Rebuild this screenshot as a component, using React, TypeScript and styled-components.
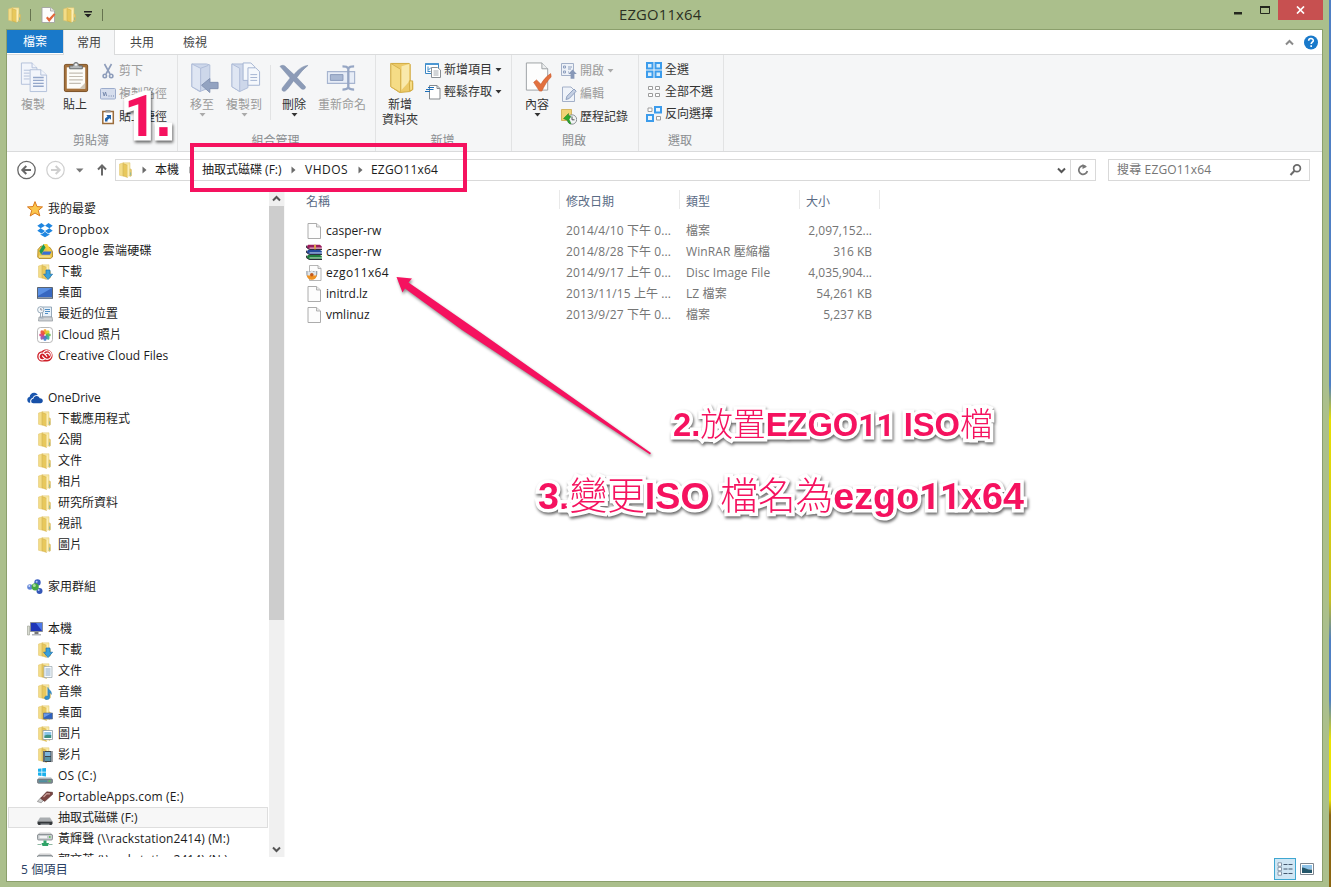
import React from 'react';
import styled, { createGlobalStyle } from 'styled-components';

const GlobalStyle = createGlobalStyle`
  * { box-sizing: border-box; }
  body {
    margin: 0;
    font-family: 'Open Sans', 'Noto Sans CJK TC', sans-serif;
    font-size: 12px;
    line-height: 16px;
    color: #1b1b1b;
    overflow: hidden;
  }
  svg { display: block; flex: none; }
`;

const Desktop = styled.div`
  width: 1331px;
  height: 887px;
  position: relative;
  overflow: hidden;
  display: flex;
  background: linear-gradient(#4f7fc4 0 385px, #e8e000 420px, #c8c020 600px, #4f7fc4 640px 700px, #ece400 740px 800px, #8a6410 815px);
`;
const Frame = styled.div`
  width: 1329px;
  height: 887px;
  background: #abbf8c;
  padding: 0 6px 5px;
  display: flex;
  flex-direction: column;
`;
const TitleBar = styled.header`
  height: 29px;
  display: grid;
  grid-template-columns: 613px auto 1fr;
`;
const QuickAccess = styled.div`
  display: flex;
  align-items: center;
  padding-left: 1px;
`;
const QuickItem = styled.div<{ $gap: number }>`
  margin-right: ${p => p.$gap}px;
`;
const TitleRule = styled.div<{ $gap: number }>`
  width: 1px;
  height: 12px;
  background: #66734f;
  margin-right: ${p => p.$gap}px;
`;
const Title = styled.h1`
  margin: 0;
  font-size: 14.8px;
  letter-spacing: 0.2px;
  font-weight: 400;
  line-height: 29px;
  color: #2b3022;
`;
const Controls = styled.div`
  display: flex;
  justify-content: flex-end;
  align-items: flex-start;
`;
const ControlSlot = styled.div<{ $w: number }>`
  width: ${p => p.$w}px;
  height: 20px;
  display: flex;
  justify-content: center;
  align-items: center;
`;
const CloseButton = styled(ControlSlot)`
  background: #c75050;
`;
const Client = styled.div`
  flex: 1;
  min-height: 0;
  background: #fff;
  border: 1px solid #8b9f6c;
  display: flex;
  flex-direction: column;
`;
const Tabs = styled.nav`
  height: 25px;
  display: flex;
  border-bottom: 1px solid #dadbdc;
`;
const FileTab = styled.div`
  width: 56px;
  height: 23px;
  background: #1979ca;
  color: #fff;
  text-align: center;
  line-height: 23px;
`;
const Tab = styled.div<{ $w: number; $active?: boolean }>`
  width: ${p => p.$w}px;
  height: 25px;
  line-height: 25px;
  text-align: center;
  color: #444;
  ${p => p.$active && 'background:#f5f6f7;border-right:1px solid #dadbdc;border-left:1px solid #dadbdc;'}
`;
const TabTools = styled.div`
  margin-left: auto;
  display: flex;
  align-items: center;
  gap: 10px;
  padding-right: 4px;
`;
const Ribbon = styled.section`
  height: 97px;
  background: #f5f6f7;
  border-bottom: 1px solid #dadbdc;
  display: flex;
`;
const Group = styled.div<{ $w: number }>`
  width: ${p => p.$w}px;
  border-right: 1px solid #e2e3e4;
  display: flex;
  flex-direction: column;
`;
const GroupBody = styled.div`
  height: 77px;
  display: flex;
  padding-top: 4px;
`;
const GroupLabel = styled.div`
  text-align: center;
  color: #8a8d90;
  line-height: 18px;
  padding-right: 2px;
`;
const BigButton = styled.div<{ $w: number; $off?: boolean; $x?: number }>`
  width: ${p => p.$w}px;
  margin-left: ${p => p.$x || 0}px;
  display: flex;
  flex-direction: column;
  align-items: center;
  padding-top: 2px;
  line-height: 15px;
  text-align: center;
  white-space: nowrap;
  color: ${p => (p.$off ? '#9b9b9b' : '#333')};
`;
const BigLabel = styled.span`
  margin-top: 3px;
  margin-bottom: 1px;
`;
const IconSlot = styled.div<{ $shift: number }>`
  padding-left: ${p => p.$shift * 2}px;
`;
const SmallStack = styled.div<{ $row: number; $x?: number }>`
  margin-left: ${p => p.$x || 0}px;
  display: grid;
  grid-auto-rows: ${p => p.$row}px;
  align-content: start;
`;
const SmallButton = styled.div<{ $off?: boolean }>`
  display: flex;
  align-items: center;
  gap: 3px;
  white-space: nowrap;
  color: ${p => (p.$off ? '#9b9b9b' : '#333')};
`;
const InnerRule = styled.div`
  width: 1px;
  height: 55px;
  margin: 6px 0 0 5px;
  background: #e2e3e4;
`;
const AddressRow = styled.div`
  height: 38px;
  display: flex;
  align-items: flex-start;
  gap: 12px;
  padding: 7px 12px 0 10px;
`;
const NavButtons = styled.div`
  width: 98px;
  margin-right: -12px;
  height: 22px;
  display: flex;
  align-items: center;
`;
const Field = styled.div<{ $w: number }>`
  width: ${p => p.$w}px;
  height: 22px;
  border: 1px solid #d9d9d9;
  display: flex;
  align-items: center;
`;
const Crumb = styled.span<{ $w: number; $track?: number }>`
  width: ${p => p.$w}px;
  white-space: nowrap;
  letter-spacing: ${p => p.$track ?? 0}px;
`;
const CrumbArrow = styled.span<{ $w: number; $pad?: number }>`
  width: ${p => p.$w}px;
  padding-left: ${p => p.$pad || 0}px;
  display: flex;
  align-items: center;
`;
const RefreshBox = styled.div`
  width: 25px;
  height: 20px;
  border-left: 1px solid #d9d9d9;
  display: flex;
  align-items: center;
  justify-content: center;
`;
const SearchText = styled.span`
  padding-left: 8px;
  flex: 1;
  color: #757575;
  letter-spacing: 0.15px;
`;
const Body = styled.main`
  height: 667px;
  display: flex;
`;
const Sidebar = styled.aside`
  width: 261px;
  height: 667px;
  overflow: hidden;
  padding: 8px 0 0 1px;
`;
const TreeRow = styled.div<{ $level: number; $selected?: boolean }>`
  height: 21px;
  display: flex;
  align-items: center;
  gap: 5px;
  padding-left: ${p => (p.$level ? 28 : 18)}px;
  border: 1px solid ${p => (p.$selected ? '#dedede' : 'transparent')};
  background: ${p => (p.$selected ? '#f7f7f7' : 'transparent')};
  white-space: nowrap;
`;
const TreeLabel = styled.span<{ $track: number }>`
  letter-spacing: ${p => p.$track}px;
`;
const Scrollbar = styled.div`
  width: 16px;
  margin-left: 1px;
  background: #f0f0f0;
  border-right: 1px solid #f8f8f8;
  display: flex;
  flex-direction: column;
`;
const ScrollEnd = styled.div`
  width: 15px;
  height: 16px;
  display: flex;
  align-items: center;
  justify-content: center;
`;
const Thumb = styled.div`
  width: 15px;
  height: 414px;
  margin-bottom: auto;
  background: #cdcdcd;
`;
const Files = styled.section`
  padding-left: 15px;
`;
const HeaderRow = styled.div`
  display: flex;
  height: 30px;
`;
const HeaderCell = styled.div<{ $w: number }>`
  width: ${p => p.$w}px;
  height: 19px;
  padding-left: 6px;
  padding-top: 3px;
  line-height: 17px;
  color: #5a6b85;
  border-right: 1px solid #e9e9e9;
`;
const FileRow = styled.div`
  height: 21px;
  display: flex;
  align-items: center;
  white-space: nowrap;
`;
const NameCell = styled.div<{ $track: number }>`
  width: 266px;
  padding-left: 6px;
  letter-spacing: ${p => p.$track}px;
  display: flex;
  align-items: center;
  gap: 4px;
`;
const MetaCell = styled.div<{ $w: number; $right?: boolean }>`
  width: ${p => p.$w}px;
  color: #757575;
  letter-spacing: ${p => (p.$right ? 0 : 0.1)}px;
  text-align: ${p => (p.$right ? 'right' : 'left')};
`;
const StatusBar = styled.footer`
  flex: 1;
  display: flex;
  align-items: center;
  justify-content: space-between;
  padding-left: 14px;
  padding-right: 4px;
  letter-spacing: 0.2px;
  color: #2a4063;
`;
const StatusText = styled.span`
  padding-top: 1px;
`;
const Views = styled.div`
  display: flex;
  align-items: center;
`;
const ViewButton = styled.div<{ $on?: boolean }>`
  width: 22px;
  height: 22px;
  display: flex;
  align-items: center;
  justify-content: center;
  border: 1px solid ${p => (p.$on ? '#3fa7d1' : 'transparent')};
  background: ${p => (p.$on ? '#cfe6f4' : 'transparent')};
`;

const PINK = '#f5125f';
const Highlight = styled.div`
  position: absolute;
  left: 190px;
  top: 143px;
  width: 277px;
  height: 49px;
  border: 4px solid ${PINK};
`;
const Callout = styled.div<{ $x: number; $y: number; $size: number; $halo?: number; $track?: number }>`
  position: absolute;
  left: ${p => p.$x}px;
  top: ${p => p.$y}px;
  font-family: 'Liberation Sans', 'Noto Sans CJK TC', sans-serif;
  font-weight: 700;
  font-size: ${p => p.$size}px;
  letter-spacing: ${p => p.$track || 0}px;
  line-height: 1;
  color: ${PINK};
  white-space: pre;
  -webkit-text-stroke: ${p => p.$halo || 7}px #fff;
  stroke-linejoin: round;
  paint-order: stroke fill;
  filter: drop-shadow(1px 2px 1.5px rgba(0, 0, 0, 0.6));
`;
const Han = styled.span`
  font-weight: 300;
`;
/* Footless numeral one, scaled to the height and advance of the digits around it. */
const One = styled.span`
  font-family: Roboto, sans-serif;
  font-size: 0.967em;
  line-height: 0;
`;
const ArrowLayer = styled.svg`
  position: absolute;
  left: 380px;
  top: 260px;
  filter: drop-shadow(1px 2px 1.5px rgba(0, 0, 0, 0.45));
`;

/* ---------- small glyphs ---------- */
const Down = ({ c = '#333' }: { c?: string }) => (
  <svg width="7" height="4" viewBox="0 0 7 4"><path d="M0.5 0h6L3.5 3.5z" fill={c} /></svg>
);
const Right = () => (
  <svg width="5" height="8" viewBox="0 0 5 8"><path d="M.5.5v7L4.5 4z" fill="#6b6b6b" /></svg>
);
const Chevron = ({ up, c = '#555' }: { up?: boolean; c?: string }) => (
  <svg width="9" height="7" viewBox="0 0 9 7">
    <path d={up ? 'M1 5.5L4.5 2 8 5.5' : 'M1 1.5L4.5 5 8 1.5'} fill="none" stroke={c} strokeWidth="2" />
  </svg>
);

/* ---------- 16px icons ---------- */
const FolderShape = () => (
  <>
    <path d="M1.5 2l4-1.2v13.400l-4-.9z" fill="#f3dc86" stroke="#e0c268" strokeWidth=".5" />
    <path d="M5 .8h7v13H5z" fill="#f8e8a4" stroke="#dfc46c" strokeWidth=".5" />
    <path d="M5.200 1.600l4.300 1.600v12.300l-4.300-1.700z" fill="#e8c85c" stroke="#cda944" strokeWidth=".5" />
    <path d="M9.500 3.200l1.200-.8v11.800l-1.200 1.200z" fill="#fff3bd" />
    <path d="M12 6.800l1.500.8v6.200l-1.500.8z" fill="#e9cf72" stroke="#cfae50" strokeWidth=".4" />
    <path d="M12.600 10.400v3" stroke="#7ab3a4" strokeWidth=".8" />
  </>
);
const DownArrow16 = () => (
  <path d="M9 6h4v4.200h2.600L11 15.600 6.600 10.200H9z" fill="#38a0dc" stroke="#1a6fae" strokeWidth=".7" />
);
const PageShape = () => (
  <>
    <path d="M2 .5h8.500L14.500 4v11.500H2z" fill="#fdfdfd" stroke="#a3a3a3" strokeWidth=".9" />
    <path d="M10.500 .5V4h4" fill="#e8e8e8" stroke="#a3a3a3" strokeWidth=".8" />
  </>
);

const icons: Record<string, React.ReactNode> = {
  folder: <FolderShape />,
  page: <PageShape />,
  star: <path d="M8 .6l2 5 5.500.3-4.200 3.500 1.500 5.500L8 12l-4.800 3 1.500-5.600L.5 5.900 6 5.600z" fill="#fbc64c" stroke="#d9781d" strokeWidth="1" />,
  dropbox: (
    <g fill="#1f86e0">
      <path d="M4.500 1L.3 3.800l3.300 2.500L8 3.700zM11.500 1L8 3.700l4.400 2.600 3.300-2.500zM.3 8.800l4.200 2.700L8 8.900 3.600 6.300zM12.400 6.300L8 8.900l3.500 2.600 4.200-2.700zM8 9.700l-3.400 2.600-1-.6v1L8 15.300l4.400-2.600v-1l-1 .6z" />
    </g>
  ),
  gdrive: (
    <>
      <path d="M1 6.500L4 3l9 1.500 2.500 4V14l-2 1.500H2L.7 14z" fill="#e8c44a" stroke="#a98220" strokeWidth=".8" />
      <path d="M6.500 1h3.700l4.300 7.500h-3.700z" fill="#f6cf3e" />
      <path d="M6.500 1l2 3.500L4.200 11.500 2.300 8z" fill="#1f9a55" />
      <path d="M6.300 8.500h8.400l-1.900 3.200H4.400z" fill="#3a6fd4" />
      <path d="M2 12.500h11.500v2H2z" fill="#f3dc86" />
    </>
  ),
  download: <><FolderShape /><DownArrow16 /></>,
  desktop: (
    <>
      <path d="M.5 2.500h15v11H.5z" fill="#3767c0" stroke="#5b6470" />
      <path d="M1 3h14L1 11z" fill="#5a90e4" />
      <path d="M1 12h14v1.500H1z" fill="#8b98aa" />
    </>
  ),
  recent: (
    <>
      <path d="M5.500 1h9v10h-9z" fill="#e9f2fa" stroke="#7f95a8" strokeWidth=".8" />
      <path d="M8 3.500h5M8 5.500h5M8 7.500h3" stroke="#4f8fc5" />
      <path d="M2 11h13l.7 4H1.500z" fill="#cfd3d6" stroke="#8c9499" strokeWidth=".7" />
      <circle cx="3.800" cy="3.800" r="3.200" fill="#f4f8fb" stroke="#8fa3b2" strokeWidth=".9" />
      <path d="M3.800 2v2h1.500" fill="none" stroke="#667" strokeWidth=".7" />
      <path d="M3.500 7v5h3" fill="none" stroke="#9ab" />
    </>
  ),
  photos: (
    <>
      <rect x=".5" y=".5" width="15" height="15" rx="3" fill="#fff" stroke="#a7a7a7" strokeWidth=".8" />
      {['#f6a021', '#d9cf23', '#5fb947', '#35a99a', '#3d78c9', '#8b55b0', '#d33f7f', '#e94b35'].map((c, i) => (
        <ellipse key={c} cx="8" cy="4.700" rx="1.800" ry="2.600" fill={c} opacity=".9" transform={`rotate(${i * 45} 8 8)`} />
      ))}
    </>
  ),
  cc: (
    <>
      <path d="M4.800 3.300C6.500 1.200 11 .8 13.300 3c2.300 1.800 2.900 5 1.500 7.500-1 1.900-2.700 3-4.800 3H5.300C2.500 13.500.2 11.200.2 8.400c0-2.700 2-4.900 4.600-5.100z" fill="#cf1f28" />
      <g fill="none" stroke="#fff" strokeWidth="1.200" strokeLinecap="round">
        <path d="M8 10.900c-.8.700-1.700 1-2.700.9-1.800-.1-3.200-1.600-3.200-3.400S3.500 5 5.400 5c1.500 0 2.400.9 3.200 1.900l1.200 1.400" />
        <path d="M6.600 4.300c1-1.200 2.200-1.700 3.600-1.600 2.400.1 4.200 2 4.100 4.400-.1 2.300-2 4.200-4.300 4.200-1.700 0-2.700-.9-3.500-1.900L5.400 8" />
        <path d="M8.400 6.500c.3-.9 1-1.400 1.900-1.400 1.200 0 2.100.9 2.100 2.100" />
      </g>
    </>
  ),
  onedrive: (
    <>
      <path d="M.3 9.700c0-1.600 1-2.500 2.300-2.700C2.900 4.500 5 2.500 7.400 2.800 9 3 10.200 3.900 10.800 5 8 4.900 6.300 6.100 5.600 7.900 3.800 8.200 2.800 9.700 3.200 12.800H2.500C1 12.300.3 11.300.3 9.700z" fill="#1a56ae" />
      <path d="M4.200 11c0-1.300.9-2.200 2.200-2.300C6.700 6.900 8 5.900 9.700 6c1.600.1 2.600 1 3 2.300 1.900-.1 3.100.9 3.100 2.500 0 1.500-.9 2.500-2.400 2.500H6.300C4.900 13.300 4.200 12.300 4.200 11z" fill="#1750a8" />
    </>
  ),
  homegroup: (
    <>
      <circle cx="10.500" cy="3.500" r="3.200" fill="#3f62c2" />
      <circle cx="3" cy="8" r="2.800" fill="#6285d8" />
      <circle cx="12.500" cy="12" r="3" fill="#3558b8" />
      <circle cx="8.200" cy="7.800" r="3.600" fill="#46a842" />
      <circle cx="7.300" cy="6.600" r="1.500" fill="#a9dd9b" />
      <circle cx="9.700" cy="2.700" r="1" fill="#b8c9f4" />
      <circle cx="11.700" cy="11" r="1" fill="#b8c9f4" />
      <circle cx="2.300" cy="7" r=".9" fill="#d5e0fa" />
    </>
  ),
  computer: (
    <>
      <path d="M.5 5h2v9h-2z" fill="#d9dcd2" stroke="#999c90" strokeWidth=".6" />
      <path d="M3.500 1.500h12v9h-12z" fill="#2036b8" stroke="#8a8f98" />
      <path d="M9 2h6v8z" fill="#4d78e8" />
      <path d="M7.500 11h4v2h-4z" fill="#777" /><path d="M5 13h9v1.500H5z" fill="#b3b6bb" />
    </>
  ),
  docs: (
    <><FolderShape /><path d="M7 3.500h8v11H7z" fill="#f7fafc" stroke="#96a3ae" strokeWidth=".7" /><path d="M8.500 6h5M8.500 8h5M8.500 10h5M8.500 12h5" stroke="#7ba0c4" strokeWidth=".9" /></>
  ),
  music: (
    <><FolderShape /><path d="M11 3.500c.3 2.500 4.200 3.200 3.300 7-.5-1.200-1.200-1.800-1.800-2v5c0 2.800-4.700 2.800-4.900.5-.1-1.800 1.800-2.500 3.200-1.900V3.500z" fill="#2f8fd0" stroke="#1b6ca8" strokeWidth=".4" /></>
  ),
  deskfolder: (
    <><FolderShape /><path d="M6.500 8h9v6h-9z" fill="#2e62c0" stroke="#66707c" strokeWidth=".7" /><path d="M7 8.500h7l-7 4z" fill="#6b9ae6" /></>
  ),
  pictures: (
    <><FolderShape /><path d="M6 4.500h9.500v9H6z" fill="#fff" stroke="#8d9aa5" strokeWidth=".8" /><path d="M7.300 6h7v3.500h-7z" fill="#8cc5ea" /><path d="M7.300 9.500l3-.8 4 .4V12h-7z" fill="#3b8f83" /></>
  ),
  videos: (
    <><FolderShape /><path d="M6 4h9.500v11H6z" fill="#3c444c" /><path d="M8 5h5.500v4H8z" fill="#7fb6dd" /><path d="M8 10h5.500v4H8z" fill="#5895a8" /><path d="M7 4.500v11M14.500 4.500v11" stroke="#dfe4e8" strokeWidth="1" strokeDasharray="1 1" /></>
  ),
  osdrive: (
    <>
      <path d="M1 .8l3.500-.4v3.400H1zM5.200.300L9 0v3.800H5.200zM1 4.500h3.500v3.400L1 7.500zM5.200 4.500H9v3.900l-3.800-.5z" fill="#1ab0ec" />
      <path d="M2 9h12l1.500 3H.5z" fill="#d3d9dd" /><rect x=".5" y="11" width="15" height="4.300" rx="1" fill="#7c8a92" stroke="#555f66" strokeWidth=".6" />
      <path d="M2 12.300h8v1.800H2z" fill="#4f8f9f" /><path d="M11.500 12.500h2v1.300h-2z" fill="#55d04a" />
    </>
  ),
  usb: (
    <>
      <path d="M.3 12.500L4 8.500l3.700 1.700-3.500 3.600z" fill="#cfcfcf" stroke="#777" strokeWidth=".6" />
      <path d="M3.500 9.300L9.700 2.800l5.800.5.200 2-8 7.200z" fill="#7b4643" stroke="#43201f" strokeWidth=".5" />
      <path d="M6.500 8L10 4.600l3 .2" fill="none" stroke="#c9a09a" strokeWidth="1.200" />
    </>
  ),
  removable: (
    <>
      <path d="M3 7.500h10l2.500 4H.5z" fill="#a9adb0" /><path d="M.5 11.500h15v2.200l-1 1.300h-13l-1-1.300z" fill="#33373a" /><path d="M3.500 13.500h9v1.500h-9z" fill="#8d9194" />
    </>
  ),
  netdrive: (
    <>
      <path d="M2.500 2h11l2 2.500H.5z" fill="#e6e8ea" stroke="#999" strokeWidth=".5" /><rect x=".5" y="3.500" width="15" height="5.500" rx="1.200" fill="#c7cbce" stroke="#6d7478" strokeWidth=".7" />
      <path d="M2.500 5h7.500v2.200H2.500z" fill="#f2f3f4" /><path d="M12 5.300h1.500v1.500H12z" fill="#43c03c" />
      <path d="M6.500 9.500h3v2.500H12L11 15H5.500L4.500 12h2z" fill="#2fa368" /><path d="M.5 13.500h4M12 13.500h3.500" stroke="#8fb7a2" strokeWidth="1" />
    </>
  ),
  rar: (
    <>
      <path d="M2 .8h12l1.800 1.700v2.800H3.300L.5 3.500z" fill="#9b1b5c" /><path d="M3.500 3.600H16v1H3.500z" fill="#f0dbe5" />
      <path d="M2 6h12l1.800 1v3.200H3.300L.5 8.500z" fill="#234a9c" /><path d="M3.500 8.500H16v.9H3.500z" fill="#dfe8f5" />
      <path d="M2 11h12l1.800 1v3.400H3.300L.5 13.500z" fill="#1f7d3d" /><path d="M3.500 13.500H16v.9H3.500z" fill="#d8f0dc" />
      <path d="M.8 1.500L.2 3.200l3 2.300H16M.8 6.500L.2 8.300l3 2.200H16M.8 11.500l-.6 2 3 2H16" fill="none" stroke="#1d1d2c" strokeWidth=".9" />
      <path d="M8 .8h2v4.500H8z" fill="#d9a04a" />
    </>
  ),
  disc: (
    <>
      <path d="M3.500.5H12L15 3.500v12H3.500z" fill="#fdfdfd" stroke="#a3a3a3" strokeWidth=".8" /><path d="M12 .5v3h3" fill="#e8e8e8" stroke="#a3a3a3" strokeWidth=".8" />
      <path d="M.3 6h11v3a5.500 5.300 0 01-11 0z" fill="#98a1ab" />
      <path d="M.8 10h10a5 4.800 0 01-10 0z" fill="#f09322" />
      <path d="M1.500 5.500l2.500 1.500 1.500-2L7.500 7l2.500-1.500v5H1.500z" fill="#dfe4e8" /><circle cx="5.800" cy="9.700" r="1.800" fill="#c55a18" />
    </>
  ),
  check: (
    <><PageShape /><path d="M6 11l3.200 4L15.500 7.500l-1.500-1.200-4.800 5-1.700-1.800z" fill="#e2673a" /></>
  ),
  scissors: (
    <g fill="none" stroke="#8e9dbb" strokeWidth="1.600"><path d="M4.500 1L10 11M11.500 1L6 11" /><circle cx="4.800" cy="13" r="1.700" /><circle cx="11.200" cy="13" r="1.700" /></g>
  ),
  path: (
    <><rect x=".5" y="2.500" width="15" height="10.500" rx="1" fill="#d5dded" stroke="#9caccc" /><path d="M3 6l1.200 4L5.500 6l1.200 4" fill="none" stroke="#7083a8" strokeWidth=".9" /><path d="M8.500 10h1M10.800 10h1M13 10h1" stroke="#7083a8" /></>
  ),
  shortcut: (
    <><path d="M2.800 2.500h10.500v12H2.800z" fill="#fff" stroke="#9b6d3c" strokeWidth="1.500" /><path d="M5.500 1h5v2.500h-5z" fill="#999" /><path d="M5 12.500V9.500l2.500-2L6.300 6H11v4.700L9.500 9.200 7.500 11v1.500z" fill="#1d62ad" /></>
  ),
  newitem: (
    <><path d="M.5 1.500h13v10H.5z" fill="#fff" stroke="#3b87c4" /><path d="M.5 1h13v2H.5z" fill="#4c97d2" /><path d="M3 4.500v4l3-3M2.500 9.500h3" fill="none" stroke="#3b87c4" /><path d="M6.500 5.500h6l3 2.500v7.500h-9z" fill="#fff" stroke="#8a8f94" /><path d="M8.500 9h5M8.500 11h5M8.500 13h5" stroke="#a5abb0" /></>
  ),
  easy: (
    <><path d="M4.500 1.500H12L15 4.500V15H4.500z" fill="#fff" stroke="#85898d" /><path d="M12 1.500v3h3" fill="none" stroke="#85898d" /><path d="M3 3.500h6M1 5.500h7.500M0 7.500h5" stroke="#1e6fb8" strokeWidth="1.200" /></>
  ),
  open: (
    <><path d="M.5.5h12v12H.5z" fill="#eef2f8" stroke="#a3b0c8" /><path d="M2.500 3h2v2h-2zM2.500 8h2v2h-2zM7 4h4M7 6h3M7 9h1" stroke="#8fa0bf" fill="none" /><path d="M11.500 6.500l4.300 4.500h-2.400v4.700H9.600V11H7.200z" fill="#8798b8" /></>
  ),
  edit: (
    <><path d="M1.500 1H10L13.500 4.500V15.500h-12z" fill="#eff3f9" stroke="#a3b0c8" /><path d="M5 13.500l1-3.300 7-7.200 2.200 2.200-7 7.300z" fill="#c5d0e3" stroke="#8fa0bf" /></>
  ),
  history: (
    <><path d="M.5.5h10v11H.5z" fill="#f0d375" stroke="#cda94a" strokeWidth=".8" /><circle cx="11" cy="10.500" r="4.700" fill="#f1f4f5" stroke="#8c9294" /><path d="M11 7.500v3.300h2.500" fill="none" stroke="#555" /><path d="M2.500 9.500l5-5V7C9 7 10 7.500 10 7.500L8 10.200l2 4.500c-2 .3-3-1-3.300-3.200z" fill="#2ea82f" stroke="#1a7d1d" strokeWidth=".5" /></>
  ),
  selall: (
    <><path d="M0 0h7.500v7.500H0zM8.500 0H16v7.500H8.500zM0 8.500h7.500V16H0zM8.500 8.500H16V16H8.500z" fill="#3c9cec" /><path d="M2 2h3.500v3.500H2zM10.500 2H14v3.500h-3.500zM2 10.500h3.500V14H2zM10.500 10.500H14V14h-3.500z" fill="#d9eefc" /></>
  ),
  selnone: (
    <g fill="#fff" stroke="#9c9c9c"><path d="M2.500 2.500h4v3h-4zM9.500 2.500h4v3h-4zM2.500 9.500h4v3h-4zM9.500 9.500h4v3h-4z" /></g>
  ),
  selinv: (
    <><g fill="#e9f5fd" stroke="#3c9cec" strokeWidth="2"><path d="M9 1h6v5.500H9zM1 9h6v6H1z" /></g><g fill="#fff" stroke="#9c9c9c"><path d="M2 2h4v3.500H2zM10.500 10.500h4v3.500h-4z" /></g></>
  ),
};

const Icon = ({ name, size = 16 }: { name: string; size?: number }) => (
  <svg width={size} height={size} viewBox="0 0 16 16">{icons[name]}</svg>
);

/* ---------- 32px ribbon icons ---------- */
const big: Record<string, React.ReactNode> = {
  copy: (
    <g stroke="#b4c1da" fill="#f2f5fb">
      <path d="M3.500 1.500h11l5 5v17h-16z" /><path d="M14.500 1.500v5h5" /><path d="M6 9h9M6 12h6M6 15h6M6 18h6" />
      <path d="M12.500 8.500h11l6 5.500v17h-17z" /><path d="M23.500 8.500V14h6" /><path d="M15.500 16.500h11M15.500 19.500h11M15.500 22.500h11M15.500 25.500h11" stroke="#94a7ca" strokeWidth="1.400" />
    </g>
  ),
  paste: (
    <>
      <rect x="4.500" y="3" width="24" height="28" rx="1.500" fill="#a5713b" stroke="#7b5023" />
      <path d="M7 6h19v22H7z" fill="#fdfcf8" /><path d="M26 22v6h-6z" fill="#cfc6b6" />
      <path d="M9.500 12h14M9.500 15.500h14M9.500 19h14M9.500 22.500h12" stroke="#c3bdb2" strokeWidth="1.200" />
      <path d="M10 7.500V4.500h3.500c0-4.500 6-4.500 6 0H23v3z" fill="#b5b9bb" stroke="#63686b" /><circle cx="16.500" cy="3.300" r="1" fill="#fff" />
    </>
  ),
  move: (
    <>
      <path d="M4 2.500h15l3.500 1V27L12 31 4 26z" fill="#cdd7ea" stroke="#aebcd8" /><path d="M4 2.500l9 4.500v24l-9-5z" fill="#dfe6f3" stroke="#aebcd8" /><path d="M13 7l8-3" stroke="#aebcd8" />
      <path d="M14 24.500l8.500-7v4H31v6.500h-8.500v4z" fill="#93a3c1" stroke="#8292b2" />
    </>
  ),
  copyto: (
    <>
      <path d="M2 2.500h13l3.500 1V27L10 31l-8-5z" fill="#cdd7ea" stroke="#aebcd8" /><path d="M2 2.500L10 7v24l-8-5z" fill="#dfe6f3" stroke="#aebcd8" />
      <g fill="#f5f8fc" stroke="#a4b4d2"><path d="M13.500 1.500h8l4 4v14h-12z" /><path d="M18.500 6.500h8l4 4v14h-12z" /><path d="M21 13.500h7M21 16.500h7M21 19.500h7" /></g>
    </>
  ),
  remove: (
    <path d="M2 5c3-2 5-1 7 1.500l7.500 7C20 9 25 4.500 31 4c-4.500 3.500-8 7.500-11.500 12.500l8.500 9c1.500 2-1.500 4.500-4 2.500l-8-8c-3 4.500-5.500 8-8.500 10.500C4.500 31.500 3 29 5 26.500L12.500 17z" fill="#8c9bb7" stroke="#7c8ca8" strokeWidth=".5" />
  ),
  rename: (
    <>
      <path d="M1.500 10.500h28v12h-28z" fill="#e7edf7" stroke="#a7b5d0" strokeWidth="1.200" /><path d="M4.500 13.500h13v6h-13z" fill="#a9b8d3" stroke="#8a9bbc" />
      <path d="M17 5c3 0 5 .5 6 2 1-1.500 3-2 6-2M17 29c3 0 5-.5 6-2 1 1.500 3 2 6 2M23 7v20" fill="none" stroke="#96a6c4" strokeWidth="2.400" />
    </>
  ),
  newfolder: (
    <>
      <path d="M5 2h19l1 1v17l2.500 2v7l-3 2L14 32 5 26z" fill="#ecca68" stroke="#d1a93f" />
      <path d="M16 5l8-2.500v18l-8 9z" fill="#f9e9ab" /><path d="M5 2l10 6v24L5 26z" fill="#f5dc86" stroke="#d6b352" /><path d="M24 20h3.500v9l-3 1.500z" fill="#f5dc86" stroke="#d1a93f" />
    </>
  ),
  props: (
    <>
      <path d="M4.500 1.500h16l6 6v22h-22z" fill="#fdfdfd" stroke="#9da1a4" /><path d="M20.500 1.500v6h6" fill="#eceeef" stroke="#9da1a4" />
      <path d="M12 21.500l3-2.500 4.500 4.500C22 19 25 15.500 29.500 12.500c.5 1 .5 2.500.5 3.500-4 4-7 9-9.500 14.500h-2.500z" fill="#e2713f" stroke="#c8562a" strokeWidth=".6" />
    </>
  ),
};
const BigIcon = ({ name, shift = 0 }: { name: string; shift?: number }) => (
  <IconSlot $shift={shift}>
    <svg width="32" height="33" viewBox="0 0 33 33">{big[name]}</svg>
  </IconSlot>
);

/* ---------- data ---------- */
type Node = [icon: string, label: string, level: number, track?: number];
const tree: (Node | null)[] = [
  ['star', '我的最愛', 0],
  ['dropbox', 'Dropbox', 1, 0.35],
  ['gdrive', 'Google 雲端硬碟', 1, 0.3],
  ['download', '下載', 1],
  ['desktop', '桌面', 1],
  ['recent', '最近的位置', 1],
  ['photos', 'iCloud 照片', 1, 0.15],
  ['cc', 'Creative Cloud Files', 1, 0.05],
  null,
  ['onedrive', 'OneDrive', 0],
  ['folder', '下載應用程式', 1],
  ['folder', '公開', 1],
  ['folder', '文件', 1],
  ['folder', '相片', 1],
  ['folder', '研究所資料', 1],
  ['folder', '視訊', 1],
  ['folder', '圖片', 1],
  null,
  ['homegroup', '家用群組', 0],
  null,
  ['computer', '本機', 0],
  ['download', '下載', 1],
  ['docs', '文件', 1],
  ['music', '音樂', 1],
  ['deskfolder', '桌面', 1],
  ['pictures', '圖片', 1],
  ['videos', '影片', 1],
  ['osdrive', 'OS (C:)', 1, 0.25],
  ['usb', 'PortableApps.com (E:)', 1, 0.14],
  ['removable', '抽取式磁碟 (F:)', 1],
  ['netdrive', '黃輝聲 (\\\\rackstation2414) (M:)', 1, 0.1],
  ['netdrive', '郭文芳 (\\\\rackstation2414) (N:)', 1, 0.1],
];
const SELECTED = 29;

const files = [
  ['page', 'casper-rw', '2014/4/10 下午 0...', '檔案', '2,097,152...'],
  ['rar', 'casper-rw', '2014/8/28 下午 0...', 'WinRAR 壓縮檔', '316 KB'],
  ['disc', 'ezgo11x64', '2014/9/17 上午 0...', 'Disc Image File', '4,035,904...'],
  ['page', 'initrd.lz', '2013/11/15 上午 ...', 'LZ 檔案', '54,261 KB'],
  ['page', 'vmlinuz', '2013/9/27 下午 0...', '檔案', '5,237 KB'],
];

export default function App() {
  return (
    <>
      <GlobalStyle />
      <Desktop>
        <Frame>
          <TitleBar>
            <QuickAccess>
              <QuickItem $gap={7}><Icon name="folder" /></QuickItem>
              <TitleRule $gap={9} />
              <QuickItem $gap={6}><Icon name="check" /></QuickItem>
              <QuickItem $gap={6}><Icon name="folder" /></QuickItem>
              <QuickItem $gap={10}>
                <svg width="8" height="7" viewBox="0 0 8 7"><path d="M0 0h8v1.500H0zM.5 3h7L4 6.500z" fill="#222" /></svg>
              </QuickItem>
              <TitleRule $gap={0} />
            </QuickAccess>
            <Title>EZGO11x64</Title>
            <Controls>
              <ControlSlot $w={27}>
                <svg width="10" height="16" viewBox="0 0 10 16"><path d="M1 10h8v2.500H1z" fill="#24281e" /></svg>
              </ControlSlot>
              <ControlSlot $w={27}>
                <svg width="10" height="8" viewBox="0 0 10 8"><path d="M.5 1h9v6.500h-9z" fill="none" stroke="#24281e" strokeWidth="1" /><path d="M0 0h10v2H0z" fill="#24281e" /></svg>
              </ControlSlot>
              <CloseButton $w={45}>
                <svg width="9" height="8" viewBox="0 0 9 8"><path d="M1 .5l7 7M8 .5l-7 7" stroke="#fff" strokeWidth="1.700" /></svg>
              </CloseButton>
            </Controls>
          </TitleBar>

          <Client>
            <Tabs>
              <FileTab>檔案</FileTab>
              <Tab $w={52} $active>常用</Tab>
              <Tab $w={54}>共用</Tab>
              <Tab $w={52}>檢視</Tab>
              <TabTools>
                <Chevron up c="#8a8a8a" />
                <svg width="14" height="15" viewBox="0 0 15 15">
                  <circle cx="7.500" cy="7.500" r="7.500" fill="#1979ca" />
                  <path d="M5 5.500C5 2.500 10 2.600 10 5.300c0 1.700-2.300 1.900-2.300 3.700M7.700 10.500v1.700" fill="none" stroke="#fff" strokeWidth="1.700" />
                </svg>
              </TabTools>
            </Tabs>

            <Ribbon>
              <Group $w={171}>
                <GroupBody>
                  <BigButton $w={42} $x={5} $off><BigIcon name="copy" shift={1} /><BigLabel>複製</BigLabel></BigButton>
                  <BigButton $w={42}><BigIcon name="paste" shift={1} /><BigLabel>貼上</BigLabel></BigButton>
                  <SmallStack $row={23} $x={4}>
                    <SmallButton $off><Icon name="scissors" />剪下</SmallButton>
                    <SmallButton $off><Icon name="path" />複製路徑</SmallButton>
                    <SmallButton><Icon name="shortcut" />貼上捷徑</SmallButton>
                  </SmallStack>
                </GroupBody>
                <GroupLabel>剪貼簿</GroupLabel>
              </Group>
              <Group $w={198}>
                <GroupBody>
                  <BigButton $w={42} $x={3} $off><BigIcon name="move" shift={2} /><BigLabel>移至</BigLabel><Down c="#aaa" /></BigButton>
                  <BigButton $w={42} $off><BigIcon name="copyto" shift={2} /><BigLabel>複製到</BigLabel><Down c="#aaa" /></BigButton>
                  <InnerRule />
                  <BigButton $w={42} $x={2}><BigIcon name="remove" /><BigLabel>刪除</BigLabel><Down /></BigButton>
                  <BigButton $w={54} $off><BigIcon name="rename" /><BigLabel>重新命名</BigLabel></BigButton>
                </GroupBody>
                <GroupLabel>組合管理</GroupLabel>
              </Group>
              <Group $w={136}>
                <GroupBody>
                  <BigButton $w={42} $x={3}><BigIcon name="newfolder" shift={1.5} /><BigLabel>新增<br />資料夾</BigLabel></BigButton>
                  <SmallStack $row={22} $x={4}>
                    <SmallButton><Icon name="newitem" />新增項目 <Down /></SmallButton>
                    <SmallButton><Icon name="easy" />輕鬆存取 <Down /></SmallButton>
                  </SmallStack>
                </GroupBody>
                <GroupLabel>新增</GroupLabel>
              </Group>
              <Group $w={127}>
                <GroupBody>
                  <BigButton $w={42} $x={4}><BigIcon name="props" shift={1} /><BigLabel>內容</BigLabel><Down /></BigButton>
                  <SmallStack $row={23} $x={3}>
                    <SmallButton $off><Icon name="open" />開啟 <Down c="#aaa" /></SmallButton>
                    <SmallButton $off><Icon name="edit" />編輯</SmallButton>
                    <SmallButton><Icon name="history" />歷程記錄</SmallButton>
                  </SmallStack>
                </GroupBody>
                <GroupLabel>開啟</GroupLabel>
              </Group>
              <Group $w={85}>
                <GroupBody>
                  <SmallStack $row={22} $x={7}>
                    <SmallButton><Icon name="selall" />全選</SmallButton>
                    <SmallButton><Icon name="selnone" />全部不選</SmallButton>
                    <SmallButton><Icon name="selinv" />反向選擇</SmallButton>
                  </SmallStack>
                </GroupBody>
                <GroupLabel>選取</GroupLabel>
              </Group>
            </Ribbon>

            <AddressRow>
              <NavButtons>
                <svg width="98" height="22" viewBox="0 0 98 22">
                  <g fill="none" strokeLinejoin="miter">
                    <circle cx="9.500" cy="11" r="8.700" stroke="#686868" strokeWidth="1.300" />
                    <path d="M14 11H5.800M9.300 7l-4 4 4 4" stroke="#686868" strokeWidth="2" />
                    <circle cx="38.500" cy="11" r="8.700" stroke="#cfcfcf" strokeWidth="1.200" />
                    <path d="M34 11h8.200M38.700 7l4 4-4 4" stroke="#cfcfcf" strokeWidth="2" />
                    <path d="M85 16.500V6.500M81 10.500l4-4 4 4" stroke="#686868" strokeWidth="2" />
                  </g>
                  <path d="M59 9.500h7.500l-3.800 4z" fill="#777" />
                </svg>
              </NavButtons>
              <Field $w={981}>
                <CrumbArrow $w={26} $pad={2}><Icon name="folder" /></CrumbArrow>
                <CrumbArrow $w={13}><Right /></CrumbArrow>
                <Crumb $w={34}>本機</Crumb>
                <CrumbArrow $w={13}><Right /></CrumbArrow>
                <Crumb $w={89}>抽取式磁碟 (F:)</Crumb>
                <CrumbArrow $w={14}><Right /></CrumbArrow>
                <Crumb $w={53} $track={0.5}>VHDOS</Crumb>
                <CrumbArrow $w={13}><Right /></CrumbArrow>
                <Crumb $w={686} $track={0.2}>EZGO11x64</Crumb>
                <CrumbArrow $w={13}><Chevron /></CrumbArrow>
                <RefreshBox>
                  <svg width="12" height="12" viewBox="0 0 12 12"><path d="M8.500 2.500A4.300 4.300 0 1010.300 7" fill="none" stroke="#777" strokeWidth="1.700" /><path d="M5.500 0v5l4.500-2.300z" fill="#777" /></svg>
                </RefreshBox>
              </Field>
              <Field $w={202}>
                <SearchText>搜尋 EZGO11x64</SearchText>
                <svg width="20" height="12" viewBox="0 0 20 12"><circle cx="8" cy="4.300" r="3.400" fill="none" stroke="#6b6b6b" strokeWidth="1.700" /><path d="M5.500 6.800L1.500 11" stroke="#6b6b6b" strokeWidth="2" /></svg>
              </Field>
            </AddressRow>

            <Body>
              <Sidebar>
                {tree.map((n, i) =>
                  n ? (
                    <TreeRow key={i} $level={n[2]} $selected={i === SELECTED}>
                      <Icon name={n[0]} />
                      <TreeLabel $track={n[3] ?? 0}>{n[1]}</TreeLabel>
                    </TreeRow>
                  ) : (
                    <TreeRow key={i} $level={0} />
                  ),
                )}
              </Sidebar>
              <Scrollbar>
                <ScrollEnd><Chevron up /></ScrollEnd>
                <Thumb />
                <ScrollEnd><Chevron /></ScrollEnd>
              </Scrollbar>
              <Files>
                <HeaderRow>
                  <HeaderCell $w={260}>名稱</HeaderCell>
                  <HeaderCell $w={120}>修改日期</HeaderCell>
                  <HeaderCell $w={120}>類型</HeaderCell>
                  <HeaderCell $w={80}>大小</HeaderCell>
                </HeaderRow>
                {files.map(([ic, name, date, type, size], i) => (
                  <FileRow key={i}>
                    <NameCell $track={ic === 'disc' ? 0.35 : 0}><Icon name={ic} />{name}</NameCell>
                    <MetaCell $w={120}>{date}</MetaCell>
                    <MetaCell $w={106}>{type}</MetaCell>
                    <MetaCell $w={80} $right>{size}</MetaCell>
                  </FileRow>
                ))}
              </Files>
            </Body>

            <StatusBar>
              <StatusText>5 個項目</StatusText>
              <Views>
                <ViewButton $on>
                  <svg width="16" height="14" viewBox="0 0 16 14"><g fill="#fff" stroke="#7d8fa3" strokeWidth=".9"><path d="M1 .8h3.500v3.400H1zM1 5.300h3.500v3.400H1zM1 9.800h3.500v3.400H1z" /></g><path d="M6.500 2.500h4M11.500 2.500h4M6.500 7h4M11.500 7h4M6.500 11.500h4M11.500 11.500h4" stroke="#44586e" /></svg>
                </ViewButton>
                <ViewButton>
                  <svg width="14" height="12" viewBox="0 0 14 12"><path d="M.5.5h13v11H.5z" fill="#fff" stroke="#7f8790" /><path d="M2 2h10v4H2z" fill="#8fc3e8" /><path d="M2 4.500c3 0 5 2.500 10 2V10H2z" fill="#25576b" /></svg>
                </ViewButton>
              </Views>
            </StatusBar>
          </Client>
        </Frame>

        <Highlight />
        <ArrowLayer width="290" height="210" viewBox="380 260 290 210">
          <path d="M396.500 277L412 278.500L408.500 282.500L477 330L651 453L650 454.500L462 330L405 288.500L402.500 292.500Z" fill={PINK} />
        </ArrowLayer>
        <Callout $x={124} $y={87} $size={59} $halo={9} $track={-1.5}><One>1</One>.</Callout>
        <Callout $x={673} $y={409} $size={32.7}>2.<Han>放置</Han>EZGO<One>11</One> ISO<Han>檔</Han></Callout>
        <Callout $x={538} $y={478} $size={37.7}>3.<Han>變更</Han>ISO <Han>檔名為</Han>ezgo<One>11</One>x64</Callout>
      </Desktop>
    </>
  );
}
